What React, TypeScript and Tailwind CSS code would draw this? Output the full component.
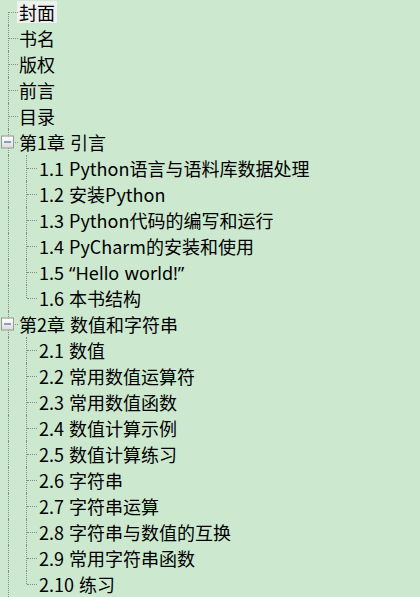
import React from "react";

type Node = { label: React.ReactNode; key: string; children?: { key: string; label: React.ReactNode }[]; selected?: boolean };

const Q = ({ children }: { children: React.ReactNode }) => (
  <span style={{ fontFamily: '"Noto Sans", sans-serif' }}>{children}</span>
);

const ch = (s: string) => ({ key: s, label: s });

const TREE: Node[] = [
  { key: "cover", label: "封面", selected: true },
  { key: "title", label: "书名" },
  { key: "copy", label: "版权" },
  { key: "pref", label: "前言" },
  { key: "toc", label: "目录" },
  {
    key: "c1",
    label: "第1章 引言",
    children: [
      ch("1.1 Python语言与语料库数据处理"),
      ch("1.2 安装Python"),
      ch("1.3 Python代码的编写和运行"),
      ch("1.4 PyCharm的安装和使用"),
      {
        key: "1.5",
        label: (
          <>
            1.5 <Q>“Hello world!”</Q>
          </>
        ),
      },
      ch("1.6 本书结构"),
    ],
  },
  {
    key: "c2",
    label: "第2章 数值和字符串",
    children: [
      ch("2.1 数值"),
      ch("2.2 常用数值运算符"),
      ch("2.3 常用数值函数"),
      ch("2.4 数值计算示例"),
      ch("2.5 数值计算练习"),
      ch("2.6 字符串"),
      ch("2.7 字符串运算"),
      ch("2.8 字符串与数值的互换"),
      ch("2.9 常用字符串函数"),
      ch("2.10 练习"),
    ],
  },
];

const dot = "border-dotted border-[#8a8a8a]";

function Toggle() {
  return (
    <span className="absolute left-[1px] top-1/2 -translate-y-1/2 w-[13px] h-[13px] border border-[#9a9a9a] bg-gradient-to-b from-white to-[#dcdcdc] flex items-center justify-center">
      <span className="block w-[7px] h-[1px] bg-[#2f4f8f]" />
    </span>
  );
}

function TopRow({ node, first }: { node: Node; first: boolean }) {
  return (
    <div className="relative h-[26px] flex items-center pl-[17px]">
      <span className={`absolute left-[8px] bottom-0 border-l ${dot} ${first ? "top-1/2" : "top-0"}`} />
      <span className={`absolute left-[9px] top-1/2 w-[9px] border-t ${dot}`} />
      {node.children && <Toggle />}
      <span className={`px-[2px] h-[22px] leading-[22px] whitespace-nowrap ${node.selected ? "bg-[#f0f0f0]" : ""}`}>
        {node.label}
      </span>
    </div>
  );
}

function ChildRow({ label, last }: { label: React.ReactNode; last: boolean }) {
  return (
    <div className="relative h-[26px] flex items-center pl-[37px]">
      <span className={`absolute left-[8px] top-0 bottom-0 border-l ${dot}`} />
      <span className={`absolute left-[26px] top-0 border-l ${dot} ${last ? "h-1/2" : "bottom-0"}`} />
      <span className={`absolute left-[27px] top-1/2 w-[10px] border-t ${dot}`} />
      <span className="px-[2px] h-[22px] leading-[22px] whitespace-nowrap">{label}</span>
    </div>
  );
}

export default function App() {
  return (
    <div
      className="w-[420px] h-[597px] overflow-hidden bg-[#cce8cf] text-black text-[18px] [word-spacing:1px]"
      style={{ fontFamily: '"Noto Sans CJK SC", "Noto Sans", sans-serif' }}
    >
      <div className="flex flex-col -mt-px">
        {TREE.map((n, i) => (
          <React.Fragment key={n.key}>
            <TopRow node={n} first={i === 0} />
            {n.children?.map((c, j) => (
              <ChildRow key={c.key} label={c.label} last={j === n.children!.length - 1} />
            ))}
          </React.Fragment>
        ))}
      </div>
    </div>
  );
}
